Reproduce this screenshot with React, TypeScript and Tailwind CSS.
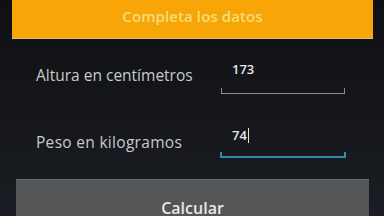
import React from "react";

export default function App() {
  return (
    <div
      className="w-[384px] h-[216px] overflow-hidden flex flex-col bg-gradient-to-b from-[#0f1013] to-[#1a1d23]"
      style={{ fontFamily: '"Open Sans", "Noto Sans", sans-serif' }}
    >
      <div className="ml-[12px] mr-[11px] h-[39px] bg-[#f8a508] border-b border-[#e0c080] flex items-center justify-center pb-[6px]">
        <span className="text-[15px] text-[#f6dd7a] font-semibold tracking-[0.1px]">Completa los datos</span>
      </div>

      <div className="flex items-center h-[30px] mt-[22px]">
        <span className="ml-[36px] w-[184px] text-[15.5px] text-[#c9cacc]">Altura en centímetros</span>
        <div className="relative w-[125px] h-[30px]">
          <span className="absolute left-[12px] top-[-1px] text-[13px] font-semibold text-[#e6e6e6]">173</span>
          <div className="absolute left-[1px] right-0 bottom-[-3px] h-[6px] border-b border-l border-r border-[#8c8c8c]" />
        </div>
      </div>

      <div className="flex items-center h-[30px] mt-[37px]">
        <span className="ml-[36px] w-[184px] text-[15.5px] tracking-[0.3px] text-[#c9cacc]">Peso en kilogramos</span>
        <div className="relative w-[126px] h-[30px]">
          <span className="absolute left-[12px] top-[-2px] text-[13px] font-semibold text-[#e6e6e6] flex items-center">
            74<span className="inline-block w-[1px] h-[15px] bg-[#e6e6e6] ml-[1px]" />
          </span>
          <div className="absolute left-0 right-0 bottom-[0px] h-[6px] border-b-2 border-l-2 border-r-2 border-[#2f8ea6]" />
        </div>
      </div>

      <div className="ml-[16px] mr-[15px] mt-[21px] flex-1 bg-[#545556] border-t border-[#6c6d6e] flex justify-center pt-[20px]">
        <span className="text-[16px] font-semibold text-[#e8e8e8] leading-none">Calcular</span>
      </div>
    </div>
  );
}
